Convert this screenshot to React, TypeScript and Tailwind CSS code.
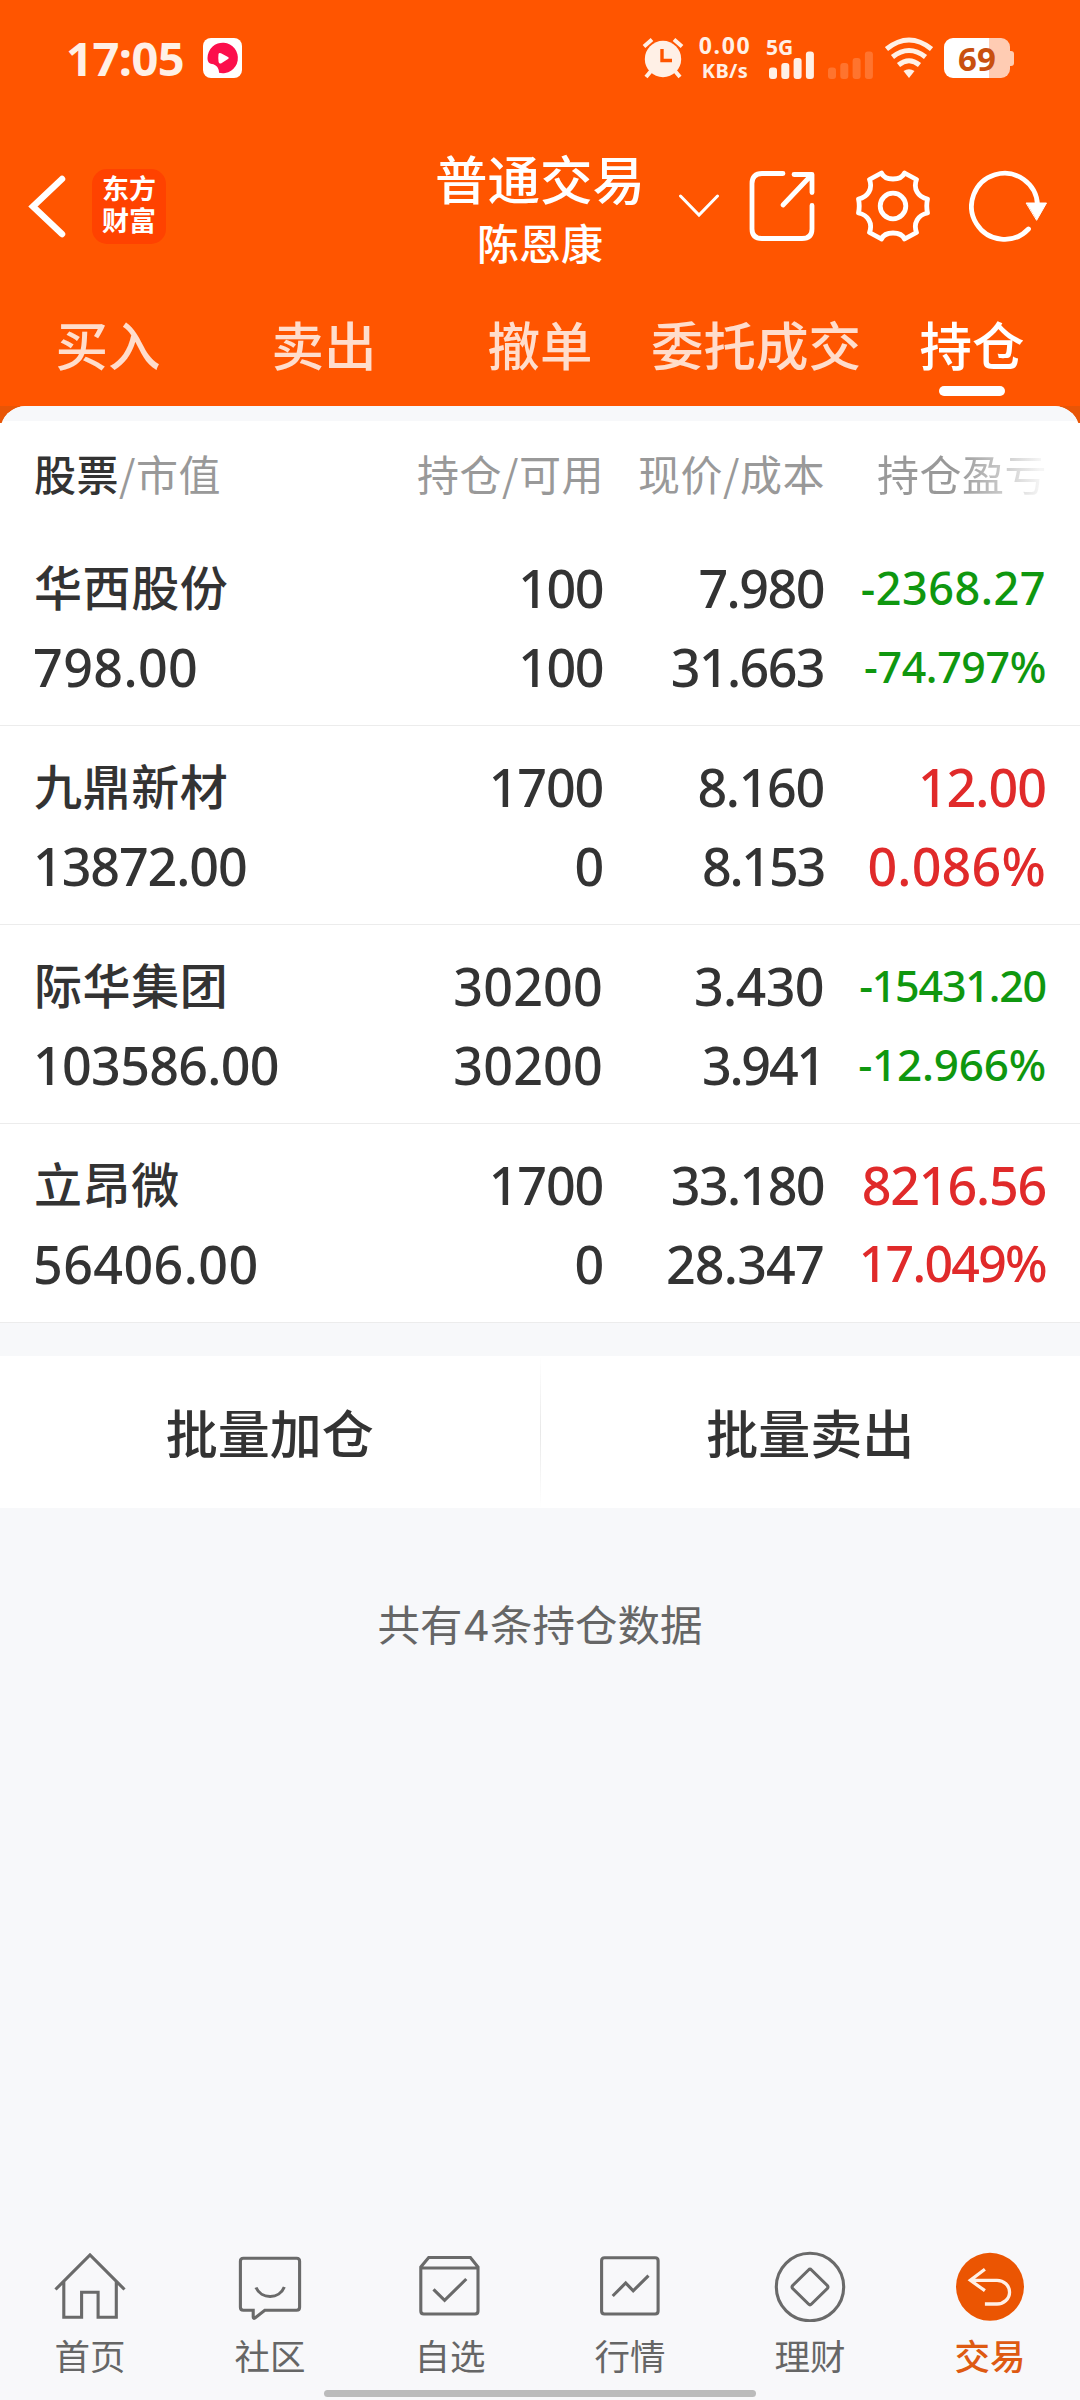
import React from 'react'

const tabs = ['买入', '卖出', '撤单', '委托成交', '持仓']

const stocks = [
  {
    name: '华西股份', value: '798.00', hold: '100', usable: '100', price: '7.980', cost: '31.663',
    profit: '-2368.27', rate: '-74.797%', color: 'text-[#0f970f]',
    valueSize: 'tracking-[0.4px]', holdSize: 'tracking-[-1.5px]', priceSize: 'tracking-[-1.5px]', costSize: 'tracking-[-1.6px]',
    profitSize: 'text-[45px] tracking-[0.5px]', rateSize: 'text-[43px] tracking-[-0.4px]',
  },
  {
    name: '九鼎新材', value: '13872.00', hold: '1700', usable: '0', price: '8.160', cost: '8.153',
    profit: '12.00', rate: '0.086%', color: 'text-[#e02a2a]',
    valueSize: 'tracking-[-1.1px]', holdSize: 'tracking-[-1.2px]', priceSize: 'tracking-[-1.3px]', costSize: 'tracking-[-2.2px]',
    profitSize: 'text-[52px] tracking-[-1px]', rateSize: 'text-[52px] tracking-[0.2px]',
  },
  {
    name: '际华集团', value: '103586.00', hold: '30200', usable: '30200', price: '3.430', cost: '3.941',
    profit: '-15431.20', rate: '-12.966%', color: 'text-[#0f970f]',
    valueSize: 'tracking-[-0.7px]', holdSize: 'tracking-[0.2px]', priceSize: 'tracking-[-0.6px]', costSize: 'tracking-[-2.2px]',
    profitSize: 'text-[43px] tracking-[-1.2px]', rateSize: 'text-[44px] tracking-[-0.2px]',
  },
  {
    name: '立昂微', value: '56406.00', hold: '1700', usable: '0', price: '33.180', cost: '28.347',
    profit: '8216.56', rate: '17.049%', color: 'text-[#e02a2a]',
    valueSize: 'tracking-[0.4px]', holdSize: 'tracking-[-1.2px]', priceSize: 'tracking-[-1.6px]', costSize: 'tracking-[-0.8px]',
    profitSize: 'text-[52px] tracking-[-1.2px]', rateSize: 'text-[50px] tracking-[-1.7px]',
  },
]

const Signal = ({ className = '' }) => (
  <svg className={className} width="46" height="28" viewBox="0 0 46 28" fill="#fff0e6">
    <rect x="0" y="16.5" width="8" height="11.5" rx="3" />
    <rect x="12.3" y="12" width="8" height="16" rx="3" />
    <rect x="24.6" y="7" width="8" height="21" rx="3" />
    <rect x="36.9" y="0.5" width="8" height="27.5" rx="3" />
  </svg>
)

const StatusBar = () => (
  <div className="flex h-[116px] items-center pl-[66px] pr-[66px] text-[#fff0e6]">
    <span className="w-[137px] whitespace-nowrap font-['Noto_Sans'] text-[47px] font-bold leading-none tracking-[-0.5px]">17:05</span>
    <svg width="39" height="40" viewBox="0 0 39 40">
      <rect width="39" height="40" rx="8" fill="#fff" />
      <path d="M4.5 20 A15.2 15.2 0 1 1 16 34.7 C16.2 30 13 26.5 9 26 C5.5 25.5 4.5 23 4.5 20Z" fill="#fc0f4c" />
      <path d="M15.5 16 Q16 14.5 18 15.3 L25 19 Q26.8 20 25 21 L18 25.5 Q16 26 15.6 24 Q15 20 15.5 16Z" fill="#fff" />
    </svg>
    <div className="ml-auto flex items-center">
      <svg width="42" height="42" viewBox="0 0 42 42" fill="none" stroke="#fff0e6" strokeWidth="4">
        <path d="M2 9.5 L10 2.5 M32 2.5 L40 9.5 M9 34 L4 40 M33 34 L38 40" />
        <circle cx="21" cy="22" r="18.2" fill="#fff0e6" stroke="none" />
        <path d="M20 12 V23.5 H30" stroke="#ff5500" strokeWidth="3.4" />
      </svg>
      <div className="ml-[13px] flex w-[56px] flex-col items-center font-['Noto_Sans'] text-[23px] font-bold leading-[26px]">
        <span className="tracking-[1.6px]">0.00</span>
        <span className="text-[20px] tracking-[0.4px]">KB/s</span>
      </div>
      <div className="relative ml-[16px] flex h-[42px] w-[46px] items-end">
        <span className="absolute -left-[3px] top-0 font-['Noto_Sans'] text-[21px] font-bold leading-[20px]">5G</span>
        <Signal />
      </div>
      <Signal className="ml-[13px] mt-[14px] opacity-20" />
      <svg className="ml-[11px]" width="48" height="42" viewBox="0 0 48 42" fill="none" stroke="#fff0e6" strokeWidth="5">
        <path d="M1.5 12 Q24 -6 46.5 12" />
        <path d="M7.5 20 Q24 7 40.5 20" />
        <path d="M13.5 28 Q24 19.5 34.5 28" />
        <path d="M18.5 34 Q24 30.5 29.5 34 L24 41Z" fill="#fff0e6" stroke="none" />
      </svg>
      <div className="ml-[11px] flex items-center">
        <div className="flex h-[40px] w-[66px] items-center justify-center rounded-[9px] bg-linear-to-r from-white from-[45px] to-[#ffccb3] to-[45px] font-['Noto_Sans'] text-[33px] font-bold leading-none text-[#c9500f]">69</div>
        <div className="h-[15px] w-[4px] rounded-r-[3px] bg-[#ffccb3]"></div>
      </div>
    </div>
  </div>
)

const TitleBar = () => (
  <div className="grid h-[180px] grid-cols-[1fr_208px_1fr] items-center text-white">
    <div className="flex items-center pl-[28px]">
      <svg width="40" height="64" viewBox="0 0 40 64" fill="none" stroke="#fff" strokeWidth="6.5" strokeLinecap="round">
        <path d="M34 5 L5 32.5 L34 60" />
      </svg>
      <div className="ml-[24px] flex h-[75px] w-[74px] flex-col items-center justify-center rounded-[15px] bg-[#ff4200] text-[27px] font-bold leading-[32px]">
        <span>东方</span>
        <span>财富</span>
      </div>
    </div>
    <div className="flex flex-col items-center whitespace-nowrap pt-[10px]">
      <span className="text-[52.5px] font-medium leading-[68px]">普通交易</span>
      <span className="text-[42px] font-medium leading-[60px]">陈恩康</span>
    </div>
    <div className="flex items-center pl-[34px]">
      <svg width="42" height="24" viewBox="0 0 42 24" fill="none" stroke="#fff" strokeWidth="3" strokeLinecap="round">
        <path d="M2.5 2 L21 21 L39.5 2" />
      </svg>
      <svg className="ml-[28px]" width="68" height="72" viewBox="0 0 68 72" fill="none" stroke="#fff" strokeWidth="4.8" strokeLinecap="round" strokeLinejoin="round">
        <path d="M35 3.5 H14 Q4 3.5 4 13.5 V59 Q4 68.5 14 68.5 H54 Q64 68.5 64 59 V35.5" />
        <path d="M46 4.5 H64 V22.5 M63 5.5 L35 35" />
      </svg>
      <svg className="ml-[40px]" width="74" height="72" viewBox="0 0 74 72" fill="none" stroke="#fff" strokeWidth="4.8" strokeLinejoin="round">
        <path d="M25.5 3 C29 11 45 11 48.5 3 L60.5 9.5 C57 19 62 27 71.5 29 Q70 36 71.5 43 C62 45 57 53 60.5 62.5 L48.5 69 C45 61 29 61 25.5 69 L13.5 62.5 C17 53 12 45 2.5 43 Q4 36 2.5 29 C12 27 17 19 13.5 9.5Z" />
        <circle cx="37" cy="36" r="12.8" />
      </svg>
      <svg className="ml-[39px]" width="80" height="74" viewBox="0 0 80 74" fill="none" stroke="#fff" strokeWidth="4.8" strokeLinecap="round">
        <path d="M68.5 36 A33 33 0 1 0 59.5 60" />
        <path d="M57.5 34 H77.5 L67.8 51Z" fill="#fff" strokeWidth="1" />
      </svg>
    </div>
  </div>
)

const navItems = [
  {
    label: '首页',
    icon: <path d="M1.5 39.5 L36 5 L70.5 39.5 M9.8 32 V67.3 H27.6 V42.3 H44.1 V67.3 H62.3 V32" />,
  },
  {
    label: '社区',
    icon: <path d="M9.4 8.3 H62.6 Q65.6 8.3 65.6 11.3 V57.3 Q65.6 60.3 62.6 60.3 H30.8 L21 68 Q19.2 69 19.2 67 V60.3 H9.4 Q6.4 60.3 6.4 57.3 V11.3 Q6.4 8.3 9.4 8.3Z M22 37.5 C27 49.5 45.5 49.5 50.3 37" />,
  },
  {
    label: '自选',
    icon: <path d="M6.8 17 L14.7 7.5 H56.4 L64 17 V61 Q64 64 61 64 H9.8 Q6.8 64 6.8 61Z M6.8 18 H64 M19.5 39.3 L30.6 50.3 L52.3 29" />,
  },
  {
    label: '行情',
    icon: <path d="M10.6 7.8 H61.1 Q64.1 7.8 64.1 10.8 V61 Q64.1 64 61.1 64 H10.6 Q7.6 64 7.6 61 V10.8 Q7.6 7.8 10.6 7.8Z M18.7 46 L31.7 33 L39.2 40.8 L54.5 25.7" />,
  },
  {
    label: '理财',
    icon: (
      <>
        <circle cx="36" cy="37" r="33.7" />
        <path d="M34.5 20 Q36 18.5 37.5 20 L53.3 35.5 Q54.6 37 53.3 38.5 L37.5 54 Q36 55.5 34.5 54 L18.7 38.5 Q17.4 37 18.7 35.5Z" />
      </>
    ),
  },
  {
    label: '交易',
    active: true,
    icon: (
      <>
        <circle cx="36" cy="36.8" r="34" fill="#eb5502" stroke="none" />
        <path d="M30.9 19.3 L16.4 30.3 L30.9 40.7 M17 30.3 H43 A12.5 11.8 0 0 1 43 54 H30.9" stroke="#fff0e6" strokeWidth="3.3" />
      </>
    ),
  },
]

const App = () => {
  return (
    <div className="flex h-[2400px] w-[1080px] flex-col bg-[#f7f8fa] font-['Inter','Noto_Sans_CJK_SC',sans-serif] text-[#333333]">
      {/* Header */}
      <header className="h-[406px] bg-[#ff5500]">
        <StatusBar />
        <TitleBar />
        <div className="grid grid-cols-5">
          {tabs.map((tab, index) => (
            <div key={index} className={`flex flex-col items-center whitespace-nowrap pt-[6px] text-[52.5px] font-medium leading-[84px] ${index === 4 ? 'text-white' : 'text-[#ffddcc]'}`}>
              <span className="h-[84px] pt-[3px]">{tab}</span>
              {index === 4 && <div className="h-[10px] w-[66px] rounded-full bg-white"></div>}
            </div>
          ))}
        </div>
      </header>

      {/* Positions */}
      <div className="bg-linear-to-b from-[#e85506] from-[17px] to-white to-[17px]">
        <div className="overflow-hidden rounded-t-[26px] bg-white">
          <div className="h-[15px] bg-[#f7f8fa]"></div>
          <div className="grid h-[106px] grid-cols-[300px_270px_221px_222px] whitespace-nowrap pl-[34px] pt-[21px] text-right font-['Noto_Sans_CJK_SC'] text-[42px] leading-[62px] tracking-[0.5px] text-[#999999]">
            <div className="text-left"><span className="font-medium text-[#333333]">股票</span>/市值</div>
            <div>持仓/可用</div>
            <div>现价/成本</div>
            <div className="bg-linear-to-r from-[#999999] from-[132px] to-[#f5f5f5] to-[215px] bg-clip-text text-transparent">持仓盈亏</div>
          </div>
        </div>
        {stocks.map((stock, index) => (
          <div key={index} className="grid h-[199px] grid-cols-[300px_269px_221px_222px] whitespace-nowrap border-b border-[#ececec] pl-[34px] pt-[22px] text-right font-['Noto_Sans'] text-[52px] font-medium leading-[79px]">
            <div className="text-left">
              <div className="h-[79px] font-['Inter','Noto_Sans_CJK_SC',sans-serif] text-[48px] tracking-[0.6px]">{stock.name}</div>
              <div className={`-mt-px -ml-px ${stock.valueSize}`}>{stock.value}</div>
            </div>
            <div className={`-mt-px ${stock.holdSize}`}>
              <div>{stock.hold}</div>
              <div>{stock.usable}</div>
            </div>
            <div className="-mt-px">
              <div className={stock.priceSize}>{stock.price}</div>
              <div className={stock.costSize}>{stock.cost}</div>
            </div>
            <div className={`-mt-px ${stock.color}`}>
              <div className={`h-[79px] ${stock.profitSize} leading-[79px]`}>{stock.profit}</div>
              <div className={`h-[79px] ${stock.rateSize} leading-[79px]`}>{stock.rate}</div>
            </div>
          </div>
        ))}
      </div>

      {/* Batch buttons */}
      <div className="mt-[33px] flex h-[152px] items-center bg-white text-center text-[52px] font-medium">
        <button className="flex-1 pt-[8px]">批量加仓</button>
        <div className="h-full w-px bg-linear-to-b from-white via-[#e8e8e8] to-white"></div>
        <button className="flex-1 pt-[8px]">批量卖出</button>
      </div>
      <p className="mt-[87px] text-center text-[42.5px] leading-[62px] text-[#666666]">共有4条持仓数据</p>

      {/* Bottom nav */}
      <nav className="mt-auto h-[160px] bg-[#f8f8fa] pt-[10px]">
        <div className="grid h-[140px] grid-cols-6">
          {navItems.map((item, index) => (
            <div key={index} className={`flex flex-col items-center text-[35.5px] leading-[72px] ${item.active ? 'font-medium text-[#de5a12]' : 'text-[#666666]'}`}>
              <svg className="shrink-0" width="72" height="72" viewBox="0 0 72 72" fill="none" stroke="#6a6a6a" strokeWidth="3.1">
                {item.icon}
              </svg>
              {item.label}
            </div>
          ))}
        </div>
        <div className="mx-auto h-[7px] w-[432px] rounded-full bg-[#bbbbbb]"></div>
      </nav>
    </div>
  )
}

export default App
